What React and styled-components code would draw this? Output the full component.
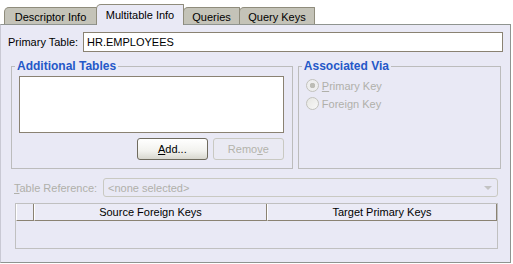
import React from 'react';
import styled, { createGlobalStyle } from 'styled-components';

const GlobalStyle = createGlobalStyle`
  html, body {
    margin: 0;
    padding: 0;
    background: #ffffff;
  }
  body {
    font-family: 'Liberation Sans', Arial, sans-serif;
    font-size: 11px;
    color: #000000;
  }
`;

const tabs = [
  { label: 'Descriptor Info', width: 93 },
  { label: 'Multitable Info', width: 88, active: true },
  { label: 'Queries', width: 57 },
  { label: 'Query Keys', width: 76 },
];

function Mnemonic({ text, at }) {
  return (
    <span>
      {text.slice(0, at)}
      <u>{text[at]}</u>
      {text.slice(at + 1)}
    </span>
  );
}

function App() {
  return (
    <Window>
      <GlobalStyle />
      <TabStrip>
        {tabs.map((tab) => (
          <Tab key={tab.label} $active={tab.active} $width={tab.width}>
            {tab.label}
          </Tab>
        ))}
      </TabStrip>
      <Panel>
        <FieldRow>
          <FieldLabel>Primary Table:</FieldLabel>
          <TextInput>HR.EMPLOYEES</TextInput>
        </FieldRow>

        <GroupRow>
          <Group $width={283}>
            <Legend>Additional Tables</Legend>
            <GroupBody>
              <ListBox />
              <ButtonRow>
                <Button>
                  <Mnemonic text="Add..." at={0} />
                </Button>
                <Button disabled>
                  <Mnemonic text="Remove" at={4} />
                </Button>
              </ButtonRow>
            </GroupBody>
          </Group>
          <Group $width={204}>
            <Legend>Associated Via</Legend>
            <RadioList>
              <RadioItem>
                <RadioDot $checked />
                <Mnemonic text="Primary Key" at={0} />
              </RadioItem>
              <RadioItem>
                <RadioDot />
                <span>Foreign Key</span>
              </RadioItem>
            </RadioList>
          </Group>
        </GroupRow>

        <ReferenceRow>
          <DisabledLabel>
            <Mnemonic text="Table Reference:" at={0} />
          </DisabledLabel>
          <Combo>
            <span>&lt;none selected&gt;</span>
            <ComboArrow />
          </Combo>
        </ReferenceRow>

        <KeyTable>
          <HeaderRow>
            <HeaderCell $width={18} />
            <HeaderCell $width={233}>Source Foreign Keys</HeaderCell>
            <HeaderCell $grow>Target Primary Keys</HeaderCell>
          </HeaderRow>
        </KeyTable>
      </Panel>
    </Window>
  );
}

const Window = styled.div`
  width: 513px;
  height: 264px;
  display: flex;
  flex-direction: column;
  padding-top: 3px;
  box-sizing: border-box;
`;

const TabStrip = styled.div`
  display: flex;
  align-items: flex-end;
  height: 21px;
  padding-left: 4px;
  position: relative;
  z-index: 1;
`;

const Tab = styled.div`
  width: ${({ $width }) => $width}px;
  height: ${({ $active }) => ($active ? 21 : 17)}px;
  box-sizing: border-box;
  display: flex;
  align-items: center;
  justify-content: center;
  padding-top: ${({ $active }) => ($active ? 0 : 1)}px;
  margin-bottom: ${({ $active }) => ($active ? -1 : 0)}px;
  margin-right: -1px;
  border: 1px solid #8f8c7c;
  border-bottom: none;
  border-top-left-radius: 5px;
  border-top-right-radius: 1px;
  background: ${({ $active }) => ($active ? '#e9e9f5' : '#c4c3b8')};
  color: #000000;
  white-space: nowrap;
  position: relative;
  z-index: ${({ $active }) => ($active ? 2 : 1)};
`;

const Panel = styled.div`
  width: 511px;
  height: 239px;
  box-sizing: border-box;
  border: 1px solid #8f9490;
  border-left-color: #c9c9d4;
  background: #e9e9f5;
  padding: 7px 7px 0 7px;
  display: flex;
  flex-direction: column;
`;

const FieldRow = styled.div`
  display: flex;
  align-items: center;
  height: 20px;
`;

const FieldLabel = styled.div`
  width: 75px;
  flex-shrink: 0;
`;

const TextInput = styled.div`
  flex: 1;
  height: 20px;
  box-sizing: border-box;
  border: 1px solid #8a8272;
  background: #ffffff;
  padding: 0 3px;
  display: flex;
  align-items: center;
`;

const GroupRow = styled.div`
  display: flex;
  gap: 5px;
  margin: 7px 2px 0 3px;
  height: 110px;
`;

const Group = styled.fieldset`
  width: ${({ $width }) => $width}px;
  box-sizing: border-box;
  margin: 0;
  padding: 0;
  border: 1px solid #bcbcbc;
  min-width: 0;
`;

const Legend = styled.legend`
  margin-left: 3px;
  padding: 0 2px;
  font-size: 12px;
  line-height: 14px;
  font-weight: bold;
  color: #2458c8;
`;

const GroupBody = styled.div`
  padding: 3px 8px 0 7px;
  display: flex;
  flex-direction: column;
`;

const ListBox = styled.div`
  height: 57px;
  box-sizing: border-box;
  border: 1px solid #8a8272;
  background: #ffffff;
`;

const ButtonRow = styled.div`
  display: flex;
  justify-content: flex-end;
  gap: 5px;
  margin-top: 5px;
`;

const Button = styled.button`
  width: 71px;
  height: 22px;
  box-sizing: border-box;
  padding: 0;
  font-family: inherit;
  font-size: 11px;
  border-radius: 3px;
  border: 1px solid ${({ disabled }) => (disabled ? '#c9c9c2' : '#6f6b5e')};
  background: ${({ disabled }) =>
    disabled ? '#eaeaf3' : 'linear-gradient(#ffffff, #f2f2ee 60%, #d8d7cf)'};
  color: ${({ disabled }) => (disabled ? '#b3b3ab' : '#000000')};
`;

const RadioList = styled.div`
  display: flex;
  flex-direction: column;
  gap: 5px;
  padding: 6px 0 0 7px;
`;

const RadioItem = styled.div`
  display: flex;
  align-items: center;
  gap: 3px;
  color: #b0b0aa;
  height: 13px;
`;

const RadioDot = styled.span`
  width: 13px;
  height: 13px;
  box-sizing: border-box;
  border-radius: 50%;
  border: 1px solid #c2c2bc;
  background: ${({ $checked }) =>
    $checked
      ? 'radial-gradient(circle, #bdbdb6 0 2.5px, #eeeeee 3px)'
      : 'linear-gradient(135deg, #e6e6e2, #f8f8f8)'};
  flex-shrink: 0;
`;

const ReferenceRow = styled.div`
  display: flex;
  align-items: center;
  margin: 9px 5px 0 6px;
  height: 19px;
`;

const DisabledLabel = styled.div`
  width: 89px;
  flex-shrink: 0;
  color: #b0b0aa;
`;

const Combo = styled.div`
  flex: 1;
  height: 19px;
  box-sizing: border-box;
  border: 1px solid #c9c9c2;
  border-radius: 3px;
  color: #b0b0aa;
  padding: 0 4px;
  display: flex;
  align-items: center;
  justify-content: space-between;
`;

const ComboArrow = styled.span`
  width: 0;
  height: 0;
  border-left: 4px solid transparent;
  border-right: 4px solid transparent;
  border-top: 4px solid #c3c3c3;
  margin-right: 1px;
`;

const KeyTable = styled.div`
  margin: 6px 5px 0 7px;
  height: 46px;
  box-sizing: border-box;
  border: 1px solid #c0c0c0;
  display: flex;
  flex-direction: column;
`;

const HeaderRow = styled.div`
  display: flex;
  height: 17px;
`;

const HeaderCell = styled.div`
  ${({ $grow, $width }) => ($grow ? 'flex: 1;' : `width: ${$width}px;`)}
  flex-shrink: 0;
  box-sizing: border-box;
  border-left: 1px solid #ffffff;
  border-right: 1px solid #8a8272;
  border-bottom: 1px solid #8a8272;
  background: #ebebf6;
  display: flex;
  align-items: center;
  justify-content: center;
`;

export default App;
